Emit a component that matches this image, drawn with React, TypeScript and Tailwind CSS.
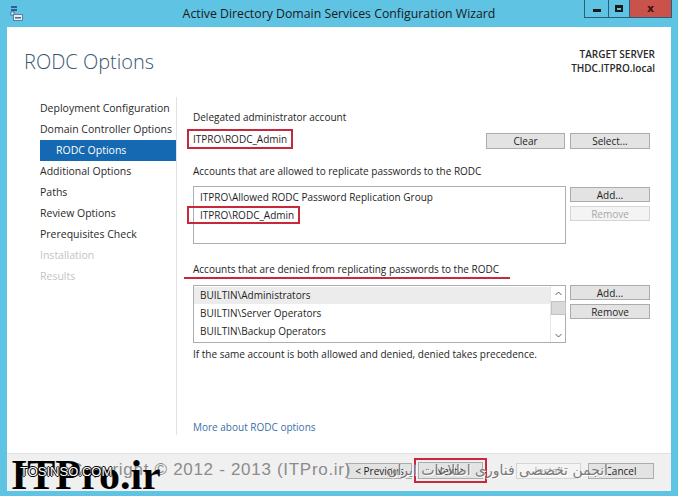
import React from "react";

const Btn = ({ children, w = "w-[80px]", h = "h-[16px]", disabled = false }: { children: React.ReactNode; w?: string; h?: string; disabled?: boolean }) => (
  <div
    className={`${w} ${h} flex items-center justify-center border text-[10px] leading-none ${
      disabled ? "border-[#d5d5d5] bg-[#f4f4f4] text-[#a8a8a8]" : "border-[#acacac] bg-[#e3e3e3] text-[#1e1e1e]"
    }`}
  >
    {children}
  </div>
);

const navItems: { label: string; state: "normal" | "selected" | "sub" | "disabled" }[] = [
  { label: "Deployment Configuration", state: "normal" },
  { label: "Domain Controller Options", state: "normal" },
  { label: "RODC Options", state: "selected" },
  { label: "Additional Options", state: "normal" },
  { label: "Paths", state: "normal" },
  { label: "Review Options", state: "normal" },
  { label: "Prerequisites Check", state: "normal" },
  { label: "Installation", state: "disabled" },
  { label: "Results", state: "disabled" },
];

export default function App() {
  return (
    <div className="relative w-[678px] h-[496px] bg-[#5fc3e4] flex flex-col overflow-hidden font-['Open_Sans',sans-serif] text-[#1e1e1e]">
      {/* Title bar */}
      <div className="h-[27px] grid grid-cols-[1fr_auto_1fr]">
        <div className="pl-[10px] pt-[5px]">
          <svg width="13" height="17" viewBox="0 0 13 17">
            <rect x="1" y="1" width="6" height="2" fill="#2f5f8a" />
            <rect x="1" y="4" width="6" height="2" fill="#2f5f8a" />
            <rect x="1" y="7" width="3" height="3" fill="#ffffff" stroke="#2f5f8a" strokeWidth="0.8" />
            <rect x="3.5" y="9.5" width="9" height="6" fill="#e8eef3" stroke="#4d6b85" strokeWidth="0.8" />
            <rect x="5" y="12" width="6" height="1.5" fill="#4d6b85" />
          </svg>
        </div>
        <div className="text-[12.3px] leading-[27px] text-[#1a1a1a] whitespace-nowrap">
          Active Directory Domain Services Configuration Wizard
        </div>
        <div className="flex justify-end items-start pr-[6px]">
          <div className="flex h-[18px] border-x border-b border-[#2c5d78]">
            <div className="w-[24px] h-full flex items-end justify-center pb-[5px] border-r border-[#2c5d78]">
              <div className="w-[8px] h-[3px] bg-[#1a1a1a]" />
            </div>
            <div className="w-[21px] h-full flex items-center justify-center border-r border-[#2c5d78]">
              <div className="w-[8px] h-[7px] border-[2px] border-[#1a1a1a] border-t-[3px]" />
            </div>
            <div className="w-[41px] h-full bg-[#c9524b] flex items-center justify-center">
              <span className="text-[11px] font-bold text-[#3a0f0f] leading-none font-['DejaVu_Sans',sans-serif]">x</span>
            </div>
          </div>
        </div>
      </div>

      {/* Window body */}
      <div className="flex-1 mx-[7px] mb-[7px] bg-white flex flex-col">
        {/* Header */}
        <div className="h-[70px] flex justify-between pl-[17px] pr-[16px]">
          <div className="pt-[21px] text-[20px] leading-[28px] font-light text-[#3b5870]">RODC Options</div>
          <div className="pt-[20px] text-right text-[10px] leading-[14px] font-semibold text-[#2a2a2a]">
            <div>TARGET SERVER</div>
            <div>THDC.ITPRO.local</div>
          </div>
        </div>

        {/* Main */}
        <div className="flex-1 flex pb-[18px]">
          {/* Nav */}
          <div className="ml-[33px] w-[136px] pt-[1px] flex flex-col text-[10.5px]">
            {navItems.map((it) => (
              <div
                key={it.label}
                className={`h-[21px] leading-[21px] whitespace-nowrap ${
                  it.state === "selected"
                    ? "bg-[#1569b3] text-white pl-[16px]"
                    : it.state === "disabled"
                    ? "text-[#c4c4c4]"
                    : "text-[#2a2a2a]"
                }`}
              >
                {it.label}
              </div>
            ))}
          </div>
          <div className="w-px bg-[#e2e2e2]" />

          {/* Content */}
          <div className="flex-1 pl-[16px] pr-[21px] flex flex-col text-[10px] text-[#1e1e1e]">
            <div className="mt-[12px] leading-[16px]">Delegated administrator account</div>
            <div className="mt-[4px] h-[20px] flex items-end justify-between">
              <div className="-ml-[6px] h-[20px] border-2 border-[#c8283c] pl-[4px] pr-[4px] flex items-center leading-none">
                ITPRO\RODC_Admin
              </div>
              <div className="flex gap-[5px]">
                <Btn w="w-[79px]">Clear</Btn>
                <Btn w="w-[80px]">Select...</Btn>
              </div>
            </div>

            <div className="mt-[14px] leading-[16px]">Accounts that are allowed to replicate passwords to the RODC</div>
            <div className="mt-[7px] flex justify-between">
              <div className="w-[373px] h-[58px] border border-[#abadb3] pt-[1px]">
                <div className="h-[18px] leading-[18px] pl-[6px]">ITPRO\Allowed RODC Password Replication Group</div>
                <div className="h-[18px] flex items-center">
                  <div className="-ml-[7px] h-[18px] border-2 border-[#c8283c] pl-[11px] pr-[4px] flex items-center leading-none">
                    ITPRO\RODC_Admin
                  </div>
                </div>
              </div>
              <div className="mt-[1px] flex flex-col gap-[4px]">
                <Btn w="w-[80px]" h="h-[15px]">Add...</Btn>
                <Btn w="w-[80px]" h="h-[15px]" disabled>Remove</Btn>
              </div>
            </div>

            <div className="mt-[17px] -ml-[9px] w-[326px] pl-[9px] leading-[16px] border-b-2 border-[#c8283c]">
              Accounts that are denied from replicating passwords to the RODC
            </div>
            <div className="mt-[6px] flex justify-between">
              <div className="w-[373px] h-[58px] border border-[#abadb3] flex">
                <div className="flex-1 pt-[1px]">
                  <div className="h-[17px] leading-[17px] pl-[6px] bg-[#ececec]">BUILTIN\Administrators</div>
                  <div className="h-[18px] leading-[18px] pl-[6px]">BUILTIN\Server Operators</div>
                  <div className="h-[18px] leading-[18px] pl-[6px]">BUILTIN\Backup Operators</div>
                </div>
                <div className="w-[15px] border-l border-[#e6e6e6] bg-white flex flex-col items-center">
                  <svg width="15" height="15" viewBox="0 0 15 15">
                    <path d="M4.5 9 L7.5 6 L10.5 9" fill="none" stroke="#606060" strokeWidth="1" />
                  </svg>
                  <div className="w-[15px] h-[14px] bg-[#dadada] border border-[#c4c4c4]" />
                  <div className="flex-1" />
                  <svg width="15" height="13" viewBox="0 0 15 13">
                    <path d="M4.5 5 L7.5 8 L10.5 5" fill="none" stroke="#606060" strokeWidth="1" />
                  </svg>
                </div>
              </div>
              <div className="flex flex-col gap-[4px]">
                <Btn w="w-[80px]" h="h-[15px]">Add...</Btn>
                <Btn w="w-[80px]" h="h-[15px]">Remove</Btn>
              </div>
            </div>
            <div className="mt-[3px] leading-[16px]">If the same account is both allowed and denied, denied takes precedence.</div>
            <div className="mt-[57px] leading-[16px] text-[#3d6fa8]">More about RODC options</div>
          </div>
        </div>

        {/* Footer */}
        <div className="h-[38px] bg-[#f0f0f0] border-t border-[#e0e0e0] flex items-start justify-end pt-[9px] pr-[17px]">
          <Btn w="w-[65px]" h="h-[16px]">&lt; Previous</Btn>
          <div className="ml-[2px] -mt-[5px] border-2 border-[#c8283c] p-[2px]">
            <Btn w="w-[65px]" h="h-[17px]">Next &gt;</Btn>
          </div>
          <div className="ml-[29px]">
            <Btn w="w-[65px]" h="h-[16px]" disabled>Install</Btn>
          </div>
          <div className="ml-[7px]">
            <Btn w="w-[66px]" h="h-[16px]">Cancel</Btn>
          </div>
        </div>
      </div>

      {/* Watermarks overlaying the footer */}
      <div className="absolute left-[70px] top-[461px] text-[17px] leading-[18px] tracking-[0.7px] font-['Liberation_Sans',sans-serif] text-[#8c8c8c] whitespace-nowrap">
        Copyright © 2012 - 2013 (ITPro.ir)
      </div>
      <div className="absolute left-[11px] top-[454px] text-[42px] leading-[42px] font-bold font-['Liberation_Serif',serif] text-black whitespace-nowrap">
        ITPro.ir
      </div>
      <div className="absolute left-[20px] top-[464px] text-[13px] leading-[16px] font-['Liberation_Sans',sans-serif] text-white whitespace-nowrap [text-shadow:1px_0_0_#000,-1px_0_0_#000,0_1px_0_#000,0_-1px_0_#000]">
        TOSINSO.COM
      </div>
      <div
        dir="rtl"
        className="absolute right-[70px] top-[461px] text-[14px] leading-[18px] font-['DejaVu_Sans',sans-serif] text-[#7a7a7a] whitespace-nowrap [text-shadow:1px_1px_0_#fff]"
      >
        انجمن تخصصی فناوری اطلاعات ایران
      </div>
    </div>
  );
}
